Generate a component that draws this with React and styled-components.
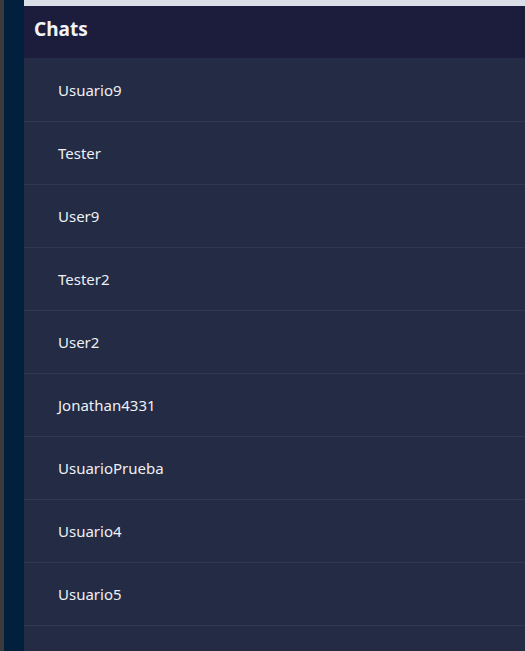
import React from "react";
import styled, { createGlobalStyle } from "styled-components";

const Global = createGlobalStyle`
  html, body { margin: 0; padding: 0; height: 100%; background: #232b45; }
  #root { height: 100%; }
  * { box-sizing: border-box; }
`;

const Page = styled.div`
  display: flex;
  height: 651px;
  overflow: hidden;
  font-family: "Noto Sans", "Open Sans", sans-serif;
`;

const Edge = styled.div`
  width: 4px;
  background: #3b3b3b;
  flex-shrink: 0;
`;

const Rail = styled.div`
  width: 20px;
  background: #00203d;
  flex-shrink: 0;
`;

const Main = styled.div`
  flex: 1;
  display: flex;
  flex-direction: column;
  background: #232b45;
  overflow: hidden;
`;

const TopStrip = styled.div`
  height: 6px;
  flex-shrink: 0;
  background: #d9dfe7;
`;

const Header = styled.div`
  height: 52px;
  flex-shrink: 0;
  background: #1c1d3c;
  display: flex;
  align-items: center;
  padding-left: 10px;
  padding-bottom: 6px;
  color: #f2f3f7;
  font-size: 19px;
  font-weight: 700;
`;

const List = styled.div`
  display: flex;
  flex-direction: column;
  padding-top: 1px;
`;

const Row = styled.div`
  height: 63px;
  flex-shrink: 0;
  display: flex;
  align-items: center;
  padding-left: 34px;
  border-bottom: 1px solid #30384f;
  color: #eef0f5;
  font-size: 15px;
`;

const users = [
  "Usuario9",
  "Tester",
  "User9",
  "Tester2",
  "User2",
  "Jonathan4331",
  "UsuarioPrueba",
  "Usuario4",
  "Usuario5",
  "",
];

export default function App() {
  return (
    <>
      <Global />
      <Page>
        <Edge />
        <Rail />
        <Main>
          <TopStrip />
          <Header>Chats</Header>
          <List>
            {users.map((u, i) => (
              <Row key={i}>{u}</Row>
            ))}
          </List>
        </Main>
      </Page>
    </>
  );
}
